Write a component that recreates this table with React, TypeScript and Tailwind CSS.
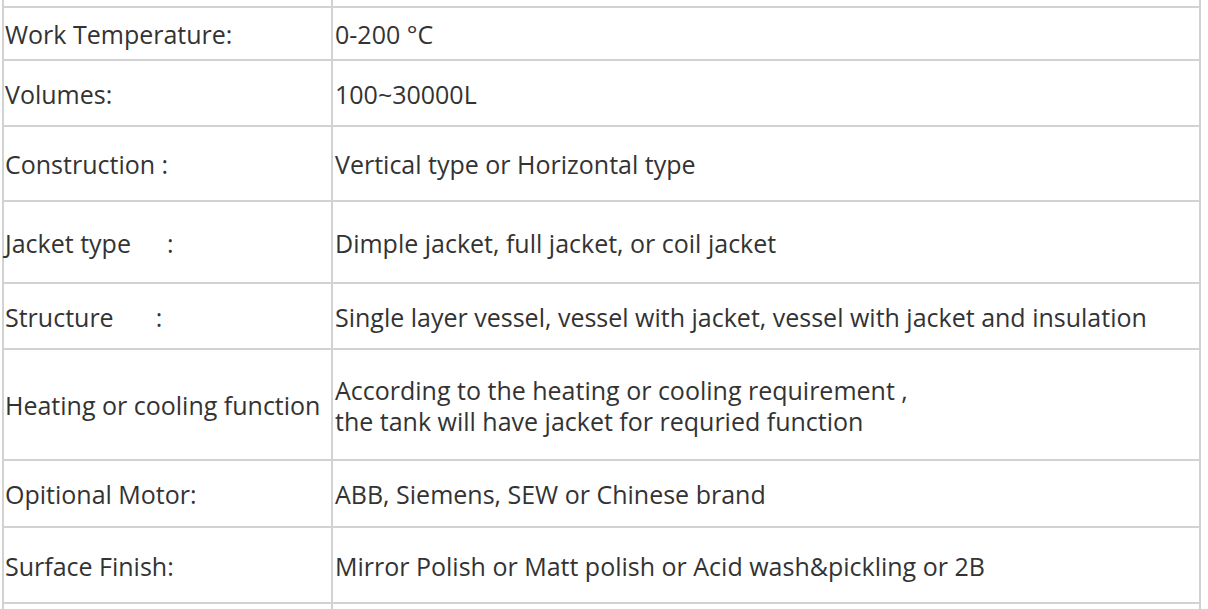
import React from "react";

const rows: { label: React.ReactNode; value: React.ReactNode; h: string }[] = [
  { label: "Work Temperature:", value: "0-200 °C", h: "h-[53px]" },
  { label: "Volumes:", value: "100~30000L", h: "h-[66px]" },
  { label: "Construction :", value: "Vertical type or Horizontal type", h: "h-[75px]" },
  {
    label: (
      <>
        Jacket type<span className="ml-[36px]">:</span>
      </>
    ),
    value: "Dimple jacket, full jacket, or coil jacket",
    h: "h-[82px]",
  },
  {
    label: (
      <>
        Structure<span className="ml-[42px]">:</span>
      </>
    ),
    value: "Single layer vessel, vessel with jacket, vessel with jacket and insulation",
    h: "h-[66px]",
  },
  {
    label: "Heating or cooling function",
    value: (
      <>
        <div>According to the heating or cooling requirement ,</div>
        <div>the tank will have jacket for requried function</div>
      </>
    ),
    h: "h-[111px]",
  },
  { label: "Opitional Motor:", value: "ABB, Siemens, SEW or Chinese brand", h: "h-[67px]" },
  { label: "Surface Finish:", value: "Mirror Polish or Matt polish or Acid wash&pickling or 2B", h: "h-[76px]" },
];

export default function App() {
  return (
    <div
      className="w-[1208px] h-[609px] overflow-hidden bg-white text-[#333333]"
      style={{ fontFamily: "'Open Sans', sans-serif" }}
    >
      <div className="ml-[2px] w-[1199px] border-x-2 border-[#d2d2d2]">
        <div className="flex h-[8px] border-b-2 border-[#d2d2d2]">
          <div className="w-[329px] border-r-2 border-[#d2d2d2]" />
          <div className="flex-1" />
        </div>
        {rows.map((r, i) => (
          <div key={i} className={`flex ${r.h} border-b-2 border-[#d2d2d2]`}>
            <div className="w-[329px] shrink-0 border-r-2 border-[#d2d2d2] flex items-center pl-[1px] pt-[2px] text-[25px] leading-[31px] whitespace-nowrap">
              <div>{r.label}</div>
            </div>
            <div className="flex-1 flex flex-col justify-center pl-[2px] pt-[2px] text-[25px] leading-[31px] whitespace-nowrap">
              {r.value}
            </div>
          </div>
        ))}
        <div className="flex h-[12px]">
          <div className="w-[329px] border-r-2 border-[#d2d2d2]" />
          <div className="flex-1" />
        </div>
      </div>
    </div>
  );
}
